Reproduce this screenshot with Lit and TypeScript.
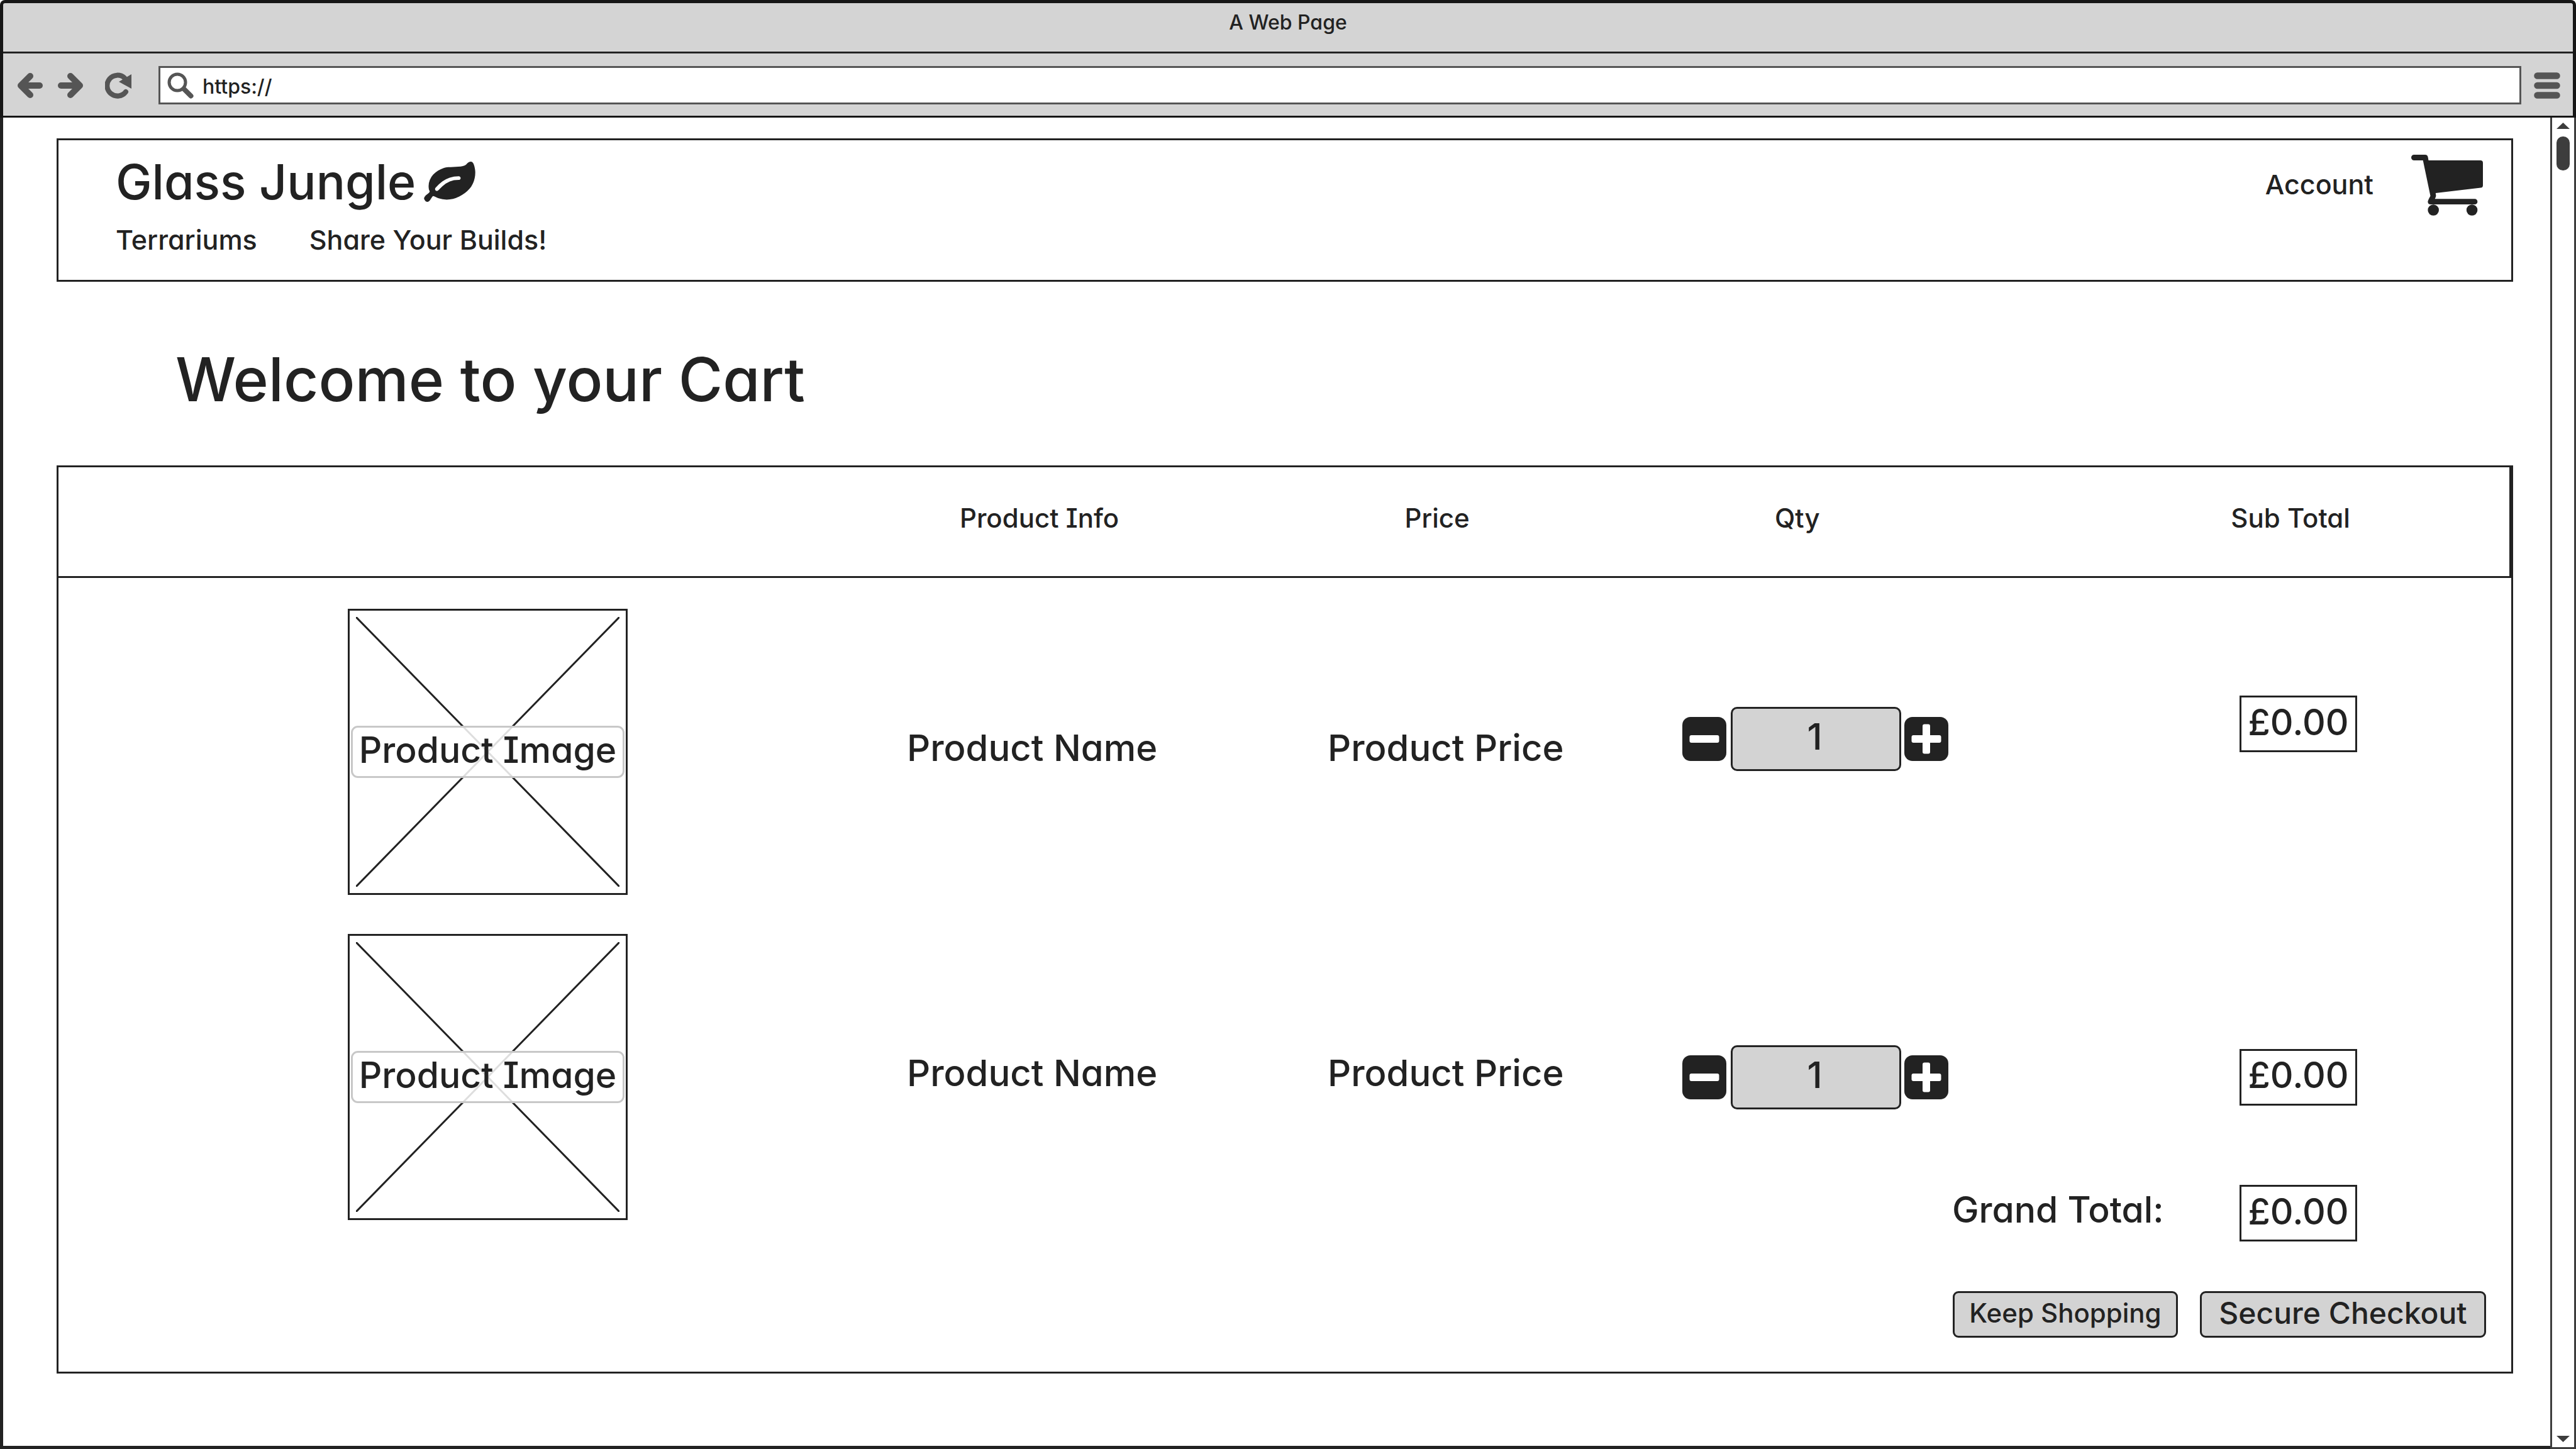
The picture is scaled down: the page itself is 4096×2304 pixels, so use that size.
import { LitElement, html, svg, css } from "lit";
import { customElement, state } from "lit/decorators.js";

interface CartItem {
  name: string;
  price: string;
  quantity: number;
  subTotal: string;
}

@customElement("browser-bar")
class BrowserBar extends LitElement {
  static styles = css`
    :host {
      display: block;
      box-sizing: border-box;
      border: 5px solid #161616;
      border-bottom: 0;
      border-radius: 8px 8px 0 0;
      background: #d4d4d4;
      color: #222;
    }
    .title {
      display: grid;
      place-items: center;
      box-sizing: border-box;
      height: 80px;
      padding-bottom: 16px;
      border-bottom: 3px solid #222;
      font-size: 32px;
      line-height: 40px;
    }
    .tools {
      display: flex;
      align-items: center;
      padding: 20px 20px 18px 22px;
      border-bottom: 3px solid #161616;
    }
    .tool {
      display: block;
      flex: none;
      padding: 0;
      border: 0;
      background: none;
      color: #555;
    }
    .tool svg,
    .address svg {
      display: block;
      flex: none;
      fill: none;
      stroke: currentColor;
      stroke-linecap: round;
      stroke-linejoin: round;
    }
    .forward {
      margin-left: 22px;
    }
    .reload {
      margin-left: 34px;
    }
    .address {
      display: flex;
      align-items: center;
      gap: 14px;
      flex: 1;
      box-sizing: border-box;
      height: 61px;
      margin: 0 20px 0 43px;
      padding: 0 11px;
      border: 3px solid #555;
      background: #fff;
      color: #555;
    }
    .url {
      flex: 1;
      min-width: 0;
      padding: 4px 0 0;
      border: 0;
      outline: 0;
      background: none;
      color: #222;
      font: inherit;
      font-size: 32px;
      line-height: 40px;
      font-feature-settings: inherit;
    }
  `;

  render() {
    return html`
      <div class="title">A Web Page</div>
      <div class="tools">
        <button class="tool" aria-label="Back">
          <svg width="42" height="42" viewBox="0 0 42 42" stroke-width="10">
            <path d="M21 6 6 21 21 36M8 21H36" />
          </svg>
        </button>
        <button class="tool forward" aria-label="Forward">
          <svg width="42" height="42" viewBox="0 0 42 42" stroke-width="10">
            <path d="M21 6 36 21 21 36M34 21H6" />
          </svg>
        </button>
        <button class="tool reload" aria-label="Reload">
          <svg width="42" height="42" viewBox="0 0 42 42" stroke-width="8">
            <path d="M33 31A16.500 16.500 0 1 1 31 9" />
            <path d="M42 3V26L22 15Z" fill="currentColor" stroke="none" />
          </svg>
        </button>
        <label class="address">
          <svg width="42" height="42" viewBox="0 0 42 42" aria-hidden="true">
            <circle cx="16" cy="16" r="13" stroke-width="5" />
            <path d="M27 27 37.500 37.500" stroke-width="8" />
          </svg>
          <input class="url" type="text" aria-label="Address" value="https://" />
        </label>
        <button class="tool" aria-label="Menu">
          <svg width="42" height="42" viewBox="0 0 42 42" stroke-width="10.500">
            <path d="M5.500 5.500H36.500M5.500 21H36.500M5.500 36.500H36.500" />
          </svg>
        </button>
      </div>
    `;
  }
}

@customElement("site-header")
class SiteHeader extends LitElement {
  static styles = css`
    :host {
      display: flex;
      justify-content: space-between;
      align-items: flex-start;
      padding: 19px 45px 37px 91px;
      border: 3px solid #222;
    }
    a {
      color: inherit;
      text-decoration: none;
    }
    svg {
      display: block;
      fill: currentColor;
    }
    .brand {
      display: flex;
      align-items: center;
      gap: 13px;
      font-size: 77px;
      line-height: 94px;
    }
    .links {
      display: flex;
      gap: 83px;
      margin-top: 19px;
      padding-bottom: 1px;
    }
    .links,
    .account {
      font-size: 43px;
      line-height: 52px;
    }
    .account {
      padding-bottom: 4px;
    }
    .actions {
      display: flex;
      align-items: center;
      gap: 60px;
      padding-top: 4px;
    }
  `;

  render() {
    return html`
      <nav>
        <a class="brand" href="#home">
          Glass Jungle
          <svg width="82" height="64" viewBox="0 128 1792 1408" aria-hidden="true">
            <path
              d="M1280 704q0-26-19-45t-45-19q-172 0-318 49.5t-259.5 134-235.5 219.5q-19 21-19 45 0 26 19 45t45 19q24 0 45-19 27-24 74-71t67-66q137-124 268.500-176t313.500-52q26 0 45-19t19-45zm512-198q0 95-20 193-46 224-184.500 383t-357.500 268q-214 108-438 108-148 0-286-47-15-5-88-42t-96-37q-16 0-39.500 32t-45 70-52.500 70-60 32q-43 0-63.500-17.500t-45.500-59.500q-2-4-6-11t-5.500-10-3-9.500-1.500-13.500q0-35 31-73.500t68-65.500 68-56 31-48q0-4-14-38t-16-44q-9-51-9-104 0-115 43.500-220t119-184.500 170.500-139 204-95.500q55-18 145-25.500t179.500-9 178.500-6 163.500-24 113.500-56.500l29.500-29.500 29.500-28 27-20 36.500-16 43.500-4.500q39 0 70.500 46t47.500 112 24 124 8 96z"
            />
          </svg>
        </a>
        <div class="links">
          <a href="#terrariums">Terrariums</a>
          <a href="#builds">Share Your Builds!</a>
        </div>
      </nav>
      <div class="actions">
        <a class="account" href="#account">Account</a>
        <a href="#cart" aria-label="Cart">
          <svg width="114" height="97" viewBox="0 0 114 97" aria-hidden="true">
            <path
              d="M4.500 0H22Q26 0 26.600 4L27.500 9H110Q114 9 114 13V48.500Q114 52.300 110.500 52.600L38.800 61 39.400 65Q39.600 67 37.600 70.300H101A4.300 4.300 0 0 1 101 79H31Q26.400 79 26.400 74.500 26.600 72.500 30.500 65.500L18.700 9H4.500A4.500 4.500 0 0 1 4.500 0Z"
            />
            <circle cx="35.200" cy="88" r="8.800" />
            <circle cx="96.600" cy="88" r="8.800" />
          </svg>
        </a>
      </div>
    `;
  }
}

@customElement("quantity-stepper")
class QuantityStepper extends LitElement {
  static properties = { value: { type: Number }, label: {} };
  declare value: number;
  declare label: string;

  static styles = css`
    :host {
      display: flex;
      align-items: center;
    }
    .step {
      flex: none;
      width: 70px;
      height: 70px;
      padding: 0;
      border: 0;
      border-radius: 13px;
      background: #222;
    }
    svg {
      display: block;
      fill: #fff;
    }
    .count {
      box-sizing: border-box;
      width: 271px;
      height: 102px;
      margin: 0 5px 0 7px;
      padding: 0 4px 7px 0;
      border: 3px solid #222;
      border-radius: 10px;
      background: #d3d3d3;
      color: #222;
      font: inherit;
      font-size: 58px;
      text-align: center;
    }
  `;

  private change(by: number) {
    this.value = Math.max(0, this.value + by);
  }

  render() {
    return html`
      <button class="step" aria-label="Decrease quantity" @click=${() => this.change(-1)}>
        <svg width="70" height="70" viewBox="0 0 70 70">
          <rect x="11.500" y="29" width="47" height="12" rx="3" />
        </svg>
      </button>
      <input class="count" type="text" inputmode="numeric" aria-label=${this.label} .value=${String(this.value)} />
      <button class="step" aria-label="Increase quantity" @click=${() => this.change(1)}>
        <svg width="70" height="70" viewBox="0 0 70 70">
          <rect x="11.500" y="29" width="47" height="12" rx="3" />
          <rect x="29" y="11.500" width="12" height="47" rx="3" />
        </svg>
      </button>
    `;
  }
}

@customElement("app-root")
class AppRoot extends LitElement {
  @state() private items: CartItem[] = [
    { name: "Product Name", price: "Product Price", quantity: 1, subTotal: "£0.00" },
    { name: "Product Name", price: "Product Price", quantity: 1, subTotal: "£0.00" },
  ];

  static styles = css`
    :host {
      display: flex;
      flex-direction: column;
      min-height: 100vh;
      background: #fff;
      color: #222;
      font-family: Inter, "Open Sans", sans-serif;
      font-weight: 450;
      font-feature-settings: "cv08", "cv11";
    }
    .viewport {
      display: flex;
      flex: 1;
    }
    .page {
      flex: 1;
      padding: 33px 59px 60px 85px;
      border-left: 5px solid #222;
      border-bottom: 5px solid #222;
    }
    .scrollbar {
      display: flex;
      flex-direction: column;
      align-items: center;
      flex: none;
      width: 35px;
      padding: 8px 0;
      border: solid #3d3d3d;
      border-width: 0 3px 3px;
      color: #3d3d3d;
    }
    .scrollbar svg {
      display: block;
      fill: currentColor;
    }
    .thumb {
      width: 21px;
      height: 54px;
      margin: 12px 0 auto;
      border-radius: 10px;
      background: currentColor;
    }
    h1 {
      margin: 97px 0 79px;
      padding-left: 189px;
      font-size: 96px;
      font-weight: inherit;
      line-height: 116px;
    }
    .cart {
      padding-bottom: 54px;
      border: 3px solid #222;
    }
    table,
    thead,
    tbody,
    tfoot {
      display: block;
    }
    tr {
      display: grid;
      grid-template-columns: 1349fr 669fr 564fr 873fr 445fr;
      align-items: center;
    }
    th,
    td {
      display: block;
      padding: 0;
      font-weight: inherit;
      text-align: left;
      white-space: nowrap;
    }
    thead tr {
      box-sizing: border-box;
      height: 176px;
      border: solid #222;
      border-width: 0 3px 3px 0;
    }
    thead th {
      padding: 0 0 11px 2px;
      font-size: 42px;
      line-height: 52px;
    }
    thead .head-info {
      padding-left: 85px;
    }
    thead .head-price {
      padding-left: 124px;
    }
    thead .head-qty {
      padding-left: 149px;
    }
    tbody {
      padding-top: 18px;
      font-size: 58px;
      line-height: 70px;
    }
    tbody tr {
      padding: 31px 0;
    }
    .picture {
      padding-left: 460px;
    }
    .text {
      padding-bottom: 13px;
    }
    .sum {
      padding-left: 13px;
    }
    tbody tr:first-child .qty {
      padding-bottom: 42px;
    }
    tbody tr:first-child .sum {
      padding-bottom: 89px;
    }
    .placeholder {
      display: grid;
      place-items: center;
      box-sizing: border-box;
      width: 445px;
      height: 455px;
      border: 3px solid #222;
    }
    .placeholder > * {
      grid-area: 1 / 1;
    }
    .placeholder svg {
      stroke: #222;
      stroke-width: 3;
    }
    .caption {
      box-sizing: border-box;
      width: 435px;
      padding: 1px 0 6px;
      border: 3px solid #c8c8c8;
      border-radius: 11px;
      background: rgba(255, 255, 255, 0.85);
      font-size: 57px;
      text-align: center;
    }
    .amount {
      display: grid;
      place-items: center;
      box-sizing: border-box;
      width: 187px;
      height: 90px;
      padding-bottom: 5px;
      border: 3px solid #222;
      font-size: 57px;
    }
    tfoot {
      margin-top: -87px;
      font-size: 57px;
      line-height: 70px;
    }
    .grand {
      grid-column: 4;
      padding: 0 0 10px 429px;
    }
    .buttons {
      display: flex;
      justify-content: flex-end;
      gap: 35px;
      margin: 79px 40px 0 0;
    }
    .button {
      box-sizing: border-box;
      height: 74px;
      padding: 0 0 6px;
      border: 3px solid #222;
      border-radius: 9px;
      background: #d3d3d3;
      color: inherit;
      font: inherit;
      font-feature-settings: inherit;
    }
    .shop {
      width: 358px;
      font-size: 42px;
    }
    .checkout {
      width: 455px;
      font-size: 48px;
    }
  `;

  private row(item: CartItem) {
    return html`
      <tr>
        <td class="picture">
          <div class="placeholder">
            <svg width="419" height="429" viewBox="0 0 419 429" aria-hidden="true">
              ${svg`<path d="M0 0 419 429M419 0 0 429" />`}
            </svg>
            <div class="caption">Product Image</div>
          </div>
        </td>
        <td class="text">${item.name}</td>
        <td class="text">${item.price}</td>
        <td class="qty"><quantity-stepper label="Quantity" .value=${item.quantity}></quantity-stepper></td>
        <td class="sum"><div class="amount">${item.subTotal}</div></td>
      </tr>
    `;
  }

  render() {
    return html`
      <browser-bar></browser-bar>
      <div class="viewport">
        <main class="page">
          <site-header></site-header>
          <h1>Welcome to your Cart</h1>
          <section class="cart">
            <table>
              <thead>
                <tr>
                  <td></td>
                  <th class="head-info" scope="col">Product Info</th>
                  <th class="head-price" scope="col">Price</th>
                  <th class="head-qty" scope="col">Qty</th>
                  <th scope="col">Sub Total</th>
                </tr>
              </thead>
              <tbody>
                ${this.items.map((item) => this.row(item))}
              </tbody>
              <tfoot>
                <tr>
                  <th class="grand" scope="row">Grand Total:</th>
                  <td class="sum"><div class="amount">£0.00</div></td>
                </tr>
              </tfoot>
            </table>
            <div class="buttons">
              <button class="button shop">Keep Shopping</button>
              <button class="button checkout">Secure Checkout</button>
            </div>
          </section>
        </main>
        <div class="scrollbar" aria-hidden="true">
          <svg width="21" height="10" viewBox="0 0 21 10"><path d="M0 10 10.500 0 21 10Z" /></svg>
          <div class="thumb"></div>
          <svg width="21" height="10" viewBox="0 0 21 10"><path d="M0 0H21L10.500 10Z" /></svg>
        </div>
      </div>
    `;
  }
}
